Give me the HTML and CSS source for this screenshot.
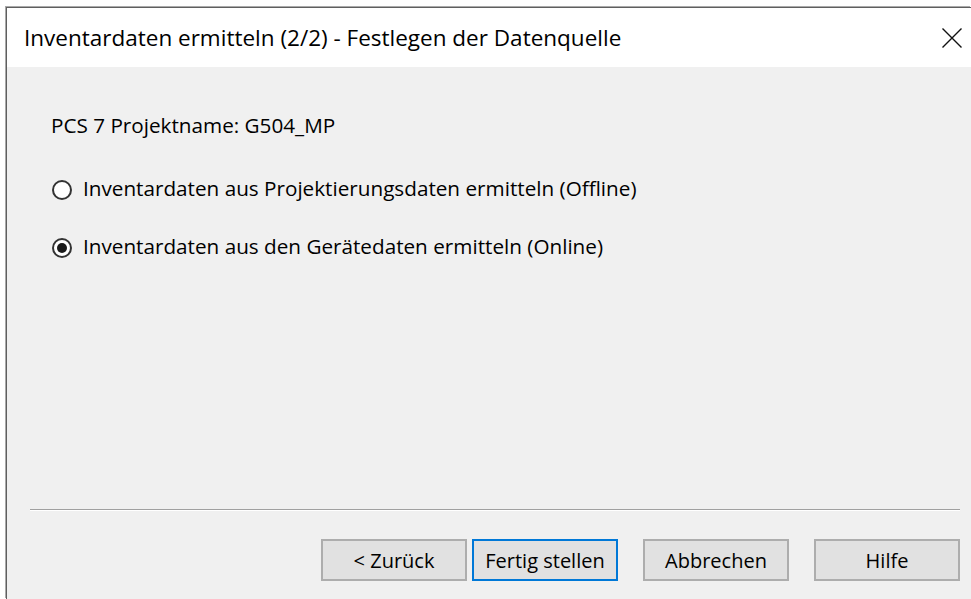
FILE: index.html
```html
<!DOCTYPE html>
<html lang="de">
<head>
<meta charset="utf-8">
<title>Inventardaten ermitteln</title>
<link rel="stylesheet" href="styles.css">
</head>
<body>
<div class="window">
  <div class="titlebar">
    <span class="title">Inventardaten ermitteln (2/2) - Festlegen der Datenquelle</span>
    <button class="close" aria-label="Schließen">
      <svg width="20" height="20" viewBox="0 0 20 20">
        <path d="M0.5 0.5 L19.5 19.5 M19.5 0.5 L0.5 19.5" stroke="#111" stroke-width="1.4" fill="none"/>
      </svg>
    </button>
  </div>
  <div class="content">
    <div class="project">PCS 7 Projektname: G504_MP</div>
    <label class="option option-first">
      <span class="radio"></span>
      <span class="option-text">Inventardaten aus Projektierungsdaten ermitteln (Offline)</span>
    </label>
    <label class="option option-second">
      <span class="radio checked"></span>
      <span class="option-text">Inventardaten aus den Gerätedaten ermitteln (Online)</span>
    </label>
    <div class="separator"></div>
    <div class="buttons">
      <div class="nav-pair">
        <button class="btn">&lt; Zurück</button>
        <button class="btn btn-default">Fertig stellen</button>
      </div>
      <button class="btn">Abbrechen</button>
      <button class="btn">Hilfe</button>
    </div>
  </div>
</div>
</body>
</html>
```

FILE: styles.css
```css
html, body {
  margin: 0;
  padding: 0;
  background: #ffffff;
}

body {
  width: 971px;
  height: 599px;
  overflow: hidden;
  font-family: "Open Sans", "Noto Sans", sans-serif;
  color: #000;
}

.window {
  margin: 7px 0 0 6px;
  width: 965px;
  height: 592px;
  border-top: 1px solid #5f5f5f;
  border-left: 1px solid #5f5f5f;
  box-shadow: -1px -1px 0 #a9a9a9;
  display: flex;
  flex-direction: column;
  box-sizing: border-box;
}

/* caption area */
.titlebar {
  height: 59px;
  flex: none;
  background: #fff;
  display: flex;
  align-items: center;
  justify-content: space-between;
  padding: 0 9px 0 17px;
}

.title {
  font-size: 22.5px;
  line-height: 30px;
  color: #000;
}

.close {
  border: 0;
  background: transparent;
  padding: 0;
  width: 20px;
  height: 20px;
  display: flex;
}

/* dialog client area */
.content {
  flex: 1;
  background: #f0f0f0;
  display: flex;
  flex-direction: column;
  padding: 44px 11px 18px 44px;
  font-size: 20.7px;
  line-height: 28px;
}

.project {
  height: 28px;
}

.option {
  display: flex;
  align-items: center;
  height: 28px;
}

.option-first {
  margin-top: 35px;
}

.option-second {
  margin-top: 30px;
}

.radio {
  width: 20px;
  height: 20px;
  box-sizing: border-box;
  border: 2px solid #333;
  border-radius: 50%;
  background: #fff;
  margin: 4px 11px 0 1px;
  display: flex;
  align-items: center;
  justify-content: center;
}

.radio.checked::after {
  content: "";
  width: 10px;
  height: 10px;
  border-radius: 50%;
  background: #1a1a1a;
}

.separator {
  margin-top: auto;
  margin-left: -21px;
  height: 1px;
  background: #a0a0a0;
  border-bottom: 1px solid #fff;
}

.buttons {
  margin-top: 28px;
  display: flex;
  justify-content: flex-end;
  gap: 25px;
}

.nav-pair {
  display: flex;
  gap: 5px;
}

.btn {
  width: 146px;
  height: 42px;
  box-sizing: border-box;
  border: 2px solid #adadad;
  background: #e1e1e1;
  font-family: inherit;
  font-size: 20px;
  color: #000;
  padding: 0;
}

.btn-default {
  border-color: #0078d7;
}
```
